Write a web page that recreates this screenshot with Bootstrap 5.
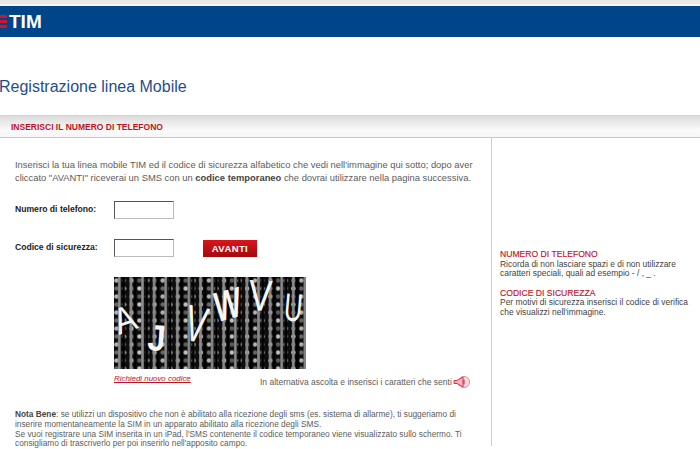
<!DOCTYPE html>
<html lang="it">
<head>
<meta charset="utf-8">
<title>Registrazione linea Mobile</title>
<link href="https://cdn.jsdelivr.net/npm/bootstrap@5.3.0/dist/css/bootstrap.min.css" rel="stylesheet">
<style>
html,body{height:449px;overflow:hidden}
body{font-family:"Liberation Sans",Arial,sans-serif;font-size:9.4px;line-height:13px;color:#5c5c5c;background:#fff}
.topline{height:6px;background:#e6e6e6;border-bottom:2px solid #f7f7f7}
.brandbar{height:31px;background:#00458a}
.logo-bars{width:7px;gap:2px}
.logo-bars i{display:block;height:3px;background:#d4122e}
.logo-txt{font-size:19px;line-height:31px;font-weight:700;color:#fff;margin-left:2px}
.pagetitle{font-size:16px;line-height:20px;font-weight:400;color:#1f4e8c;margin:40px 0 18px -1px}
.stepbar{height:23px;background:linear-gradient(#dcdcdc,#fbfbfb 70%,#f5f5f5);border-top:1px solid #d4d4d4;border-bottom:1px solid #c9c9c9;padding-left:11px;font-size:8.5px;font-weight:700;line-height:23px;color:#c1121f}
.leftcol{width:492px;height:308px;border-right:1px solid #ccc;padding:20px 0 0 15px}
.rightcol{width:208px;padding:112px 0 0 8px;font-size:8.45px;line-height:9.600px}
.introtext{width:470px;margin-bottom:17px}
.fieldlabel{width:99px;font-weight:700;color:#222;font-size:8.6px;padding-bottom:2px}
.fieldbox{width:60px;height:18px;border:1px solid #bbb;border-top-color:#555;border-left-color:#555;background:#fff;padding:0}
.fieldrow{margin-bottom:20px}
.avantibtn{width:54px;height:17px;margin-left:29px;padding:0;border:0;border-radius:0;background:linear-gradient(#d8161c,#a30a0f);color:#fff;font-size:9.5px;font-weight:700;line-height:17px;letter-spacing:.4px}
.avantibtn:hover{background:#a30a0f;color:#fff}
.captcharow{margin:20px 0 0 99px}
.captchapic{display:block;width:192px;height:92px;background:#111}
.newcode{font-size:7.9px;line-height:10px;font-style:italic;color:#c1121f;margin-top:5px;width:78px;white-space:nowrap}
.listen{margin-left:68px;margin-top:6px;font-size:8.5px;line-height:12px;white-space:nowrap}
.notetext{margin-top:21px;font-size:8.3px;line-height:9.800px;white-space:nowrap}
.notetext b,.introtext b{color:#444}
.helphead{font-size:8.6px;font-weight:400;line-height:9.600px;color:#c1121f;margin:0;-webkit-text-stroke:.15px #c1121f}
.helpblock{margin-bottom:10px;color:#444}
.speaker{margin-left:1px}
</style>
</head>
<body>
<div class="topline"></div>
<header class="brandbar d-flex align-items-center">
  <span class="logo-bars d-flex flex-column"><i></i><i></i><i></i></span>
  <span class="logo-txt">TIM</span>
</header>
<h1 class="pagetitle">Registrazione linea Mobile</h1>
<div class="stepbar">INSERISCI IL NUMERO DI TELEFONO</div>
<main class="d-flex">
  <section class="leftcol">
    <p class="introtext">Inserisci la tua linea mobile TIM ed il codice di sicurezza alfabetico che vedi nell'immagine qui sotto; dopo aver cliccato "AVANTI" riceverai un SMS con un <b>codice temporaneo</b> che dovrai utilizzare nella pagina successiva.</p>
    <form>
      <div class="d-flex align-items-center fieldrow">
        <label class="fieldlabel">Numero di telefono:</label>
        <input class="fieldbox" type="text" aria-label="Numero di telefono">
      </div>
      <div class="d-flex align-items-center">
        <label class="fieldlabel">Codice di sicurezza:</label>
        <input class="fieldbox" type="text" aria-label="Codice di sicurezza">
        <button type="button" class="btn avantibtn">AVANTI</button>
      </div>
      <div class="captcharow">
        <svg class="captchapic" viewBox="0 0 192 92" role="img" aria-label="captcha">
          <defs>
            <pattern id="dots" width="15.4" height="16" patternUnits="userSpaceOnUse">
              <rect width="15.4" height="16" fill="#0a0a0a"/>
              <circle cx="2.500" cy="3.500" r="2.300" fill="#b0b0b0"/>
              <circle cx="2.500" cy="11.500" r="2.300" fill="#666"/>
              <circle cx="10" cy="3.500" r="2.300" fill="#5c5c5c"/>
              <circle cx="10" cy="11.500" r="2.300" fill="#c0c0c0"/>
            </pattern>
            <pattern id="bars" width="11.6" height="92" patternUnits="userSpaceOnUse">
              <rect x="4" width="2.600" height="92" fill="#8c8c8c"/>
              <rect x="8" width="3" height="92" fill="#050505"/>
            </pattern>
            <filter id="soft"><feGaussianBlur stdDeviation=".45"/></filter>
          </defs>
          <g filter="url(#soft)">
            <rect width="192" height="92" fill="url(#dots)"/>
            <rect width="192" height="92" fill="url(#bars)"/>
          </g>
          <g fill="#f6f6f6" font-family="Liberation Sans, sans-serif">
            <text transform="translate(5,58) rotate(-20) scale(1,1.150)" font-size="32">A</text>
            <text transform="translate(33,73) rotate(4) scale(1,1.150)" font-size="32" font-weight="700">J</text>
            <text transform="translate(68,62) rotate(12) scale(.95,1.500)" font-size="34" font-weight="400">V</text>
            <text transform="translate(104,45) rotate(-15) scale(.9,1.300)" font-size="32" font-style="italic" font-weight="700">W</text>
            <text transform="translate(134,33) rotate(3) scale(1,1.250)" font-size="35">V</text>
            <text transform="translate(169,43) rotate(5) scale(.85,1.300)" font-size="30">U</text>
          </g>
        </svg>
        <div class="d-flex">
          <a class="newcode" href="#">Richiedi nuovo codice</a>
          <span class="listen d-flex align-items-center">In alternativa ascolta e inserisci i caratteri che senti
            <svg class="speaker flex-shrink-0" width="17" height="14" viewBox="0 0 17 14"><circle cx="11" cy="7" r="5.500" fill="#fbdfe3" stroke="#e8808f"/><path d="M1 5.500h3L10 2v10L4 8.500H1z" fill="#f1b8c1" stroke="#d9304a"/><path d="M11 4.500v5" stroke="#c1121f" fill="none"/></svg>
          </span>
        </div>
      </div>
    </form>
    <p class="notetext"><b>Nota Bene</b>: se utilizzi un dispositivo che non è abilitato alla ricezione degli sms (es. sistema di allarme), ti suggeriamo di<br>inserire momentaneamente la SIM in un apparato abilitato alla ricezione degli SMS.<br>Se vuoi registrare una SIM inserita in un iPad, l'SMS contenente il codice temporaneo viene visualizzato sullo schermo. Ti<br>consigliamo di trascriverlo per poi inserirlo nell'apposito campo.</p>
  </section>
  <aside class="rightcol">
    <div class="helpblock"><h2 class="helphead">NUMERO DI TELEFONO</h2>Ricorda di non lasciare spazi e di non utilizzare caratteri speciali, quali ad esempio - / , _ .</div>
    <div class="helpblock"><h2 class="helphead">CODICE DI SICUREZZA</h2>Per motivi di sicurezza inserisci il codice di verifica che visualizzi nell'immagine.</div>
  </aside>
</main>
<script src="https://cdn.jsdelivr.net/npm/bootstrap@5.3.0/dist/js/bootstrap.bundle.min.js"></script>
</body>
</html>
